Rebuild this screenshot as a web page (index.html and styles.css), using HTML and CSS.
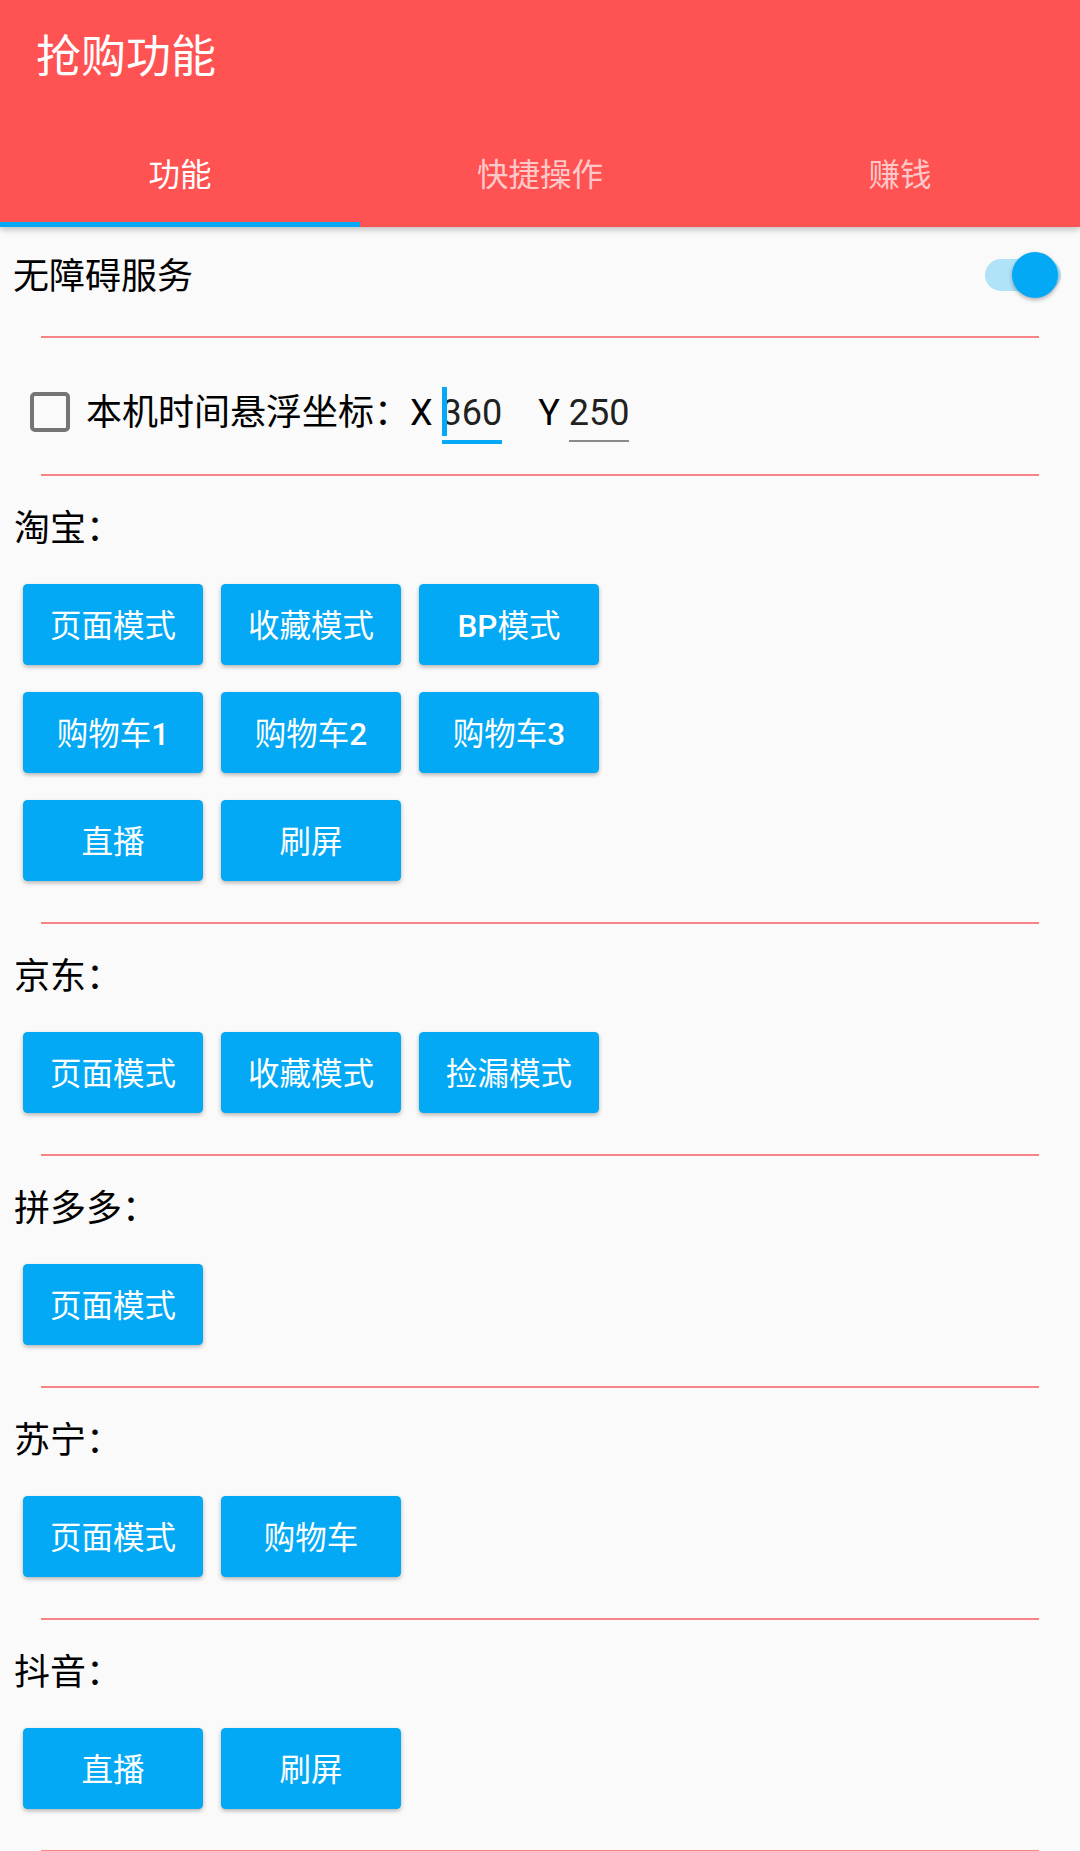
FILE: index.html
```html
<!DOCTYPE html>
<html lang="zh-CN">
<head>
<meta charset="utf-8">
<title>抢购功能</title>
<link rel="stylesheet" href="styles.css">
</head>
<body>
<header class="appbar">
  <div class="toolbar"><h1 class="title">抢购功能</h1></div>
  <nav class="tabs">
    <div class="tab active">功能</div>
    <div class="tab">快捷操作</div>
    <div class="tab">赚钱</div>
  </nav>
</header>
<main class="content">
  <div class="switch-row">
    <span class="row-text">无障碍服务</span>
    <span class="switch"></span>
  </div>
  <div class="divider"></div>
  <div class="check-row">
    <span class="checkbox"></span>
    <div class="coord">本机时间悬浮坐标：X <span class="edit focused">360</span><span class="ylabel">Y </span><span class="edit">250</span></div>
  </div>

  <section class="section">
    <div class="divider"></div>
    <div class="label">淘宝：</div>
    <div class="buttons">
      <button class="btn">页面模式</button>
      <button class="btn">收藏模式</button>
      <button class="btn"><span class="lat">BP</span>模式</button>
      <button class="btn">购物车<span class="lat">1</span></button>
      <button class="btn">购物车<span class="lat">2</span></button>
      <button class="btn">购物车<span class="lat">3</span></button>
      <button class="btn">直播</button>
      <button class="btn">刷屏</button>
    </div>
  </section>

  <section class="section">
    <div class="divider"></div>
    <div class="label">京东：</div>
    <div class="buttons">
      <button class="btn">页面模式</button>
      <button class="btn">收藏模式</button>
      <button class="btn">捡漏模式</button>
    </div>
  </section>

  <section class="section">
    <div class="divider"></div>
    <div class="label">拼多多：</div>
    <div class="buttons">
      <button class="btn">页面模式</button>
    </div>
  </section>

  <section class="section">
    <div class="divider"></div>
    <div class="label">苏宁：</div>
    <div class="buttons">
      <button class="btn">页面模式</button>
      <button class="btn">购物车</button>
    </div>
  </section>

  <section class="section">
    <div class="divider"></div>
    <div class="label">抖音：</div>
    <div class="buttons">
      <button class="btn">直播</button>
      <button class="btn">刷屏</button>
    </div>
  </section>
  <div class="divider"></div>
</main>
</body>
</html>
```
FILE: styles.css
```css
* { box-sizing: border-box; }
html, body {
  margin: 0;
  padding: 0;
  background: #fafafa;
}
body {
  width: 1080px;
  height: 1851px;
  overflow: hidden;
  font-family: Roboto, "Noto Sans CJK SC", sans-serif;
  color: #000;
}
.appbar {
  background: #ff5252;
  position: relative;
  z-index: 2;
  box-shadow: 0 3px 6px rgba(0, 0, 0, 0.22);
}
.toolbar {
  height: 118px;
  display: flex;
  align-items: center;
  padding-left: 36px;
}
.title {
  margin: 0 0 3px 0;
  font-size: 45px;
  font-weight: 400;
  line-height: 60px;
  color: #fff;
}
.tabs {
  display: flex;
  height: 109px;
}
.tab {
  flex: 1;
  display: flex;
  align-items: center;
  justify-content: center;
  font-size: 31.5px;
  color: rgba(255, 255, 255, 0.7);
  border-bottom: 5px solid transparent;
  padding-top: 4px;
}
.tab.active {
  color: #fff;
  border-bottom-color: #03a9f4;
}
.content {
  padding: 0;
}
.switch-row {
  height: 96px;
  display: flex;
  align-items: center;
  justify-content: space-between;
  padding: 4px 19px 0 13px;
}
.row-text {
  font-size: 36px;
  line-height: 48px;
}
.switch {
  width: 76px;
  height: 32px;
  border-radius: 16px;
  background: #b0e2f8;
  position: relative;
  margin-top: -4px;
}
.switch::after {
  content: "";
  position: absolute;
  right: 3px;
  top: -7px;
  width: 46px;
  height: 46px;
  border-radius: 50%;
  background: #03a9f4;
  box-shadow: 0 2px 4px rgba(0, 0, 0, 0.3);
}
.divider {
  height: 2px;
  margin: 0 41px;
  background: #f88585;
}
.switch-row + .divider {
  margin-top: 13px;
}
.check-row {
  display: flex;
  align-items: center;
  height: 68px;
  margin: 40px 0 28px 0;
  padding-left: 30px;
}
.checkbox {
  width: 40px;
  height: 40px;
  border: 4.5px solid #757575;
  border-radius: 5px;
  flex: none;
}
.coord {
  margin: 9px 0 0 16px;
  font-size: 36px;
  line-height: 48px;
  white-space: nowrap;
}
.edit {
  display: inline-block;
  position: relative;
  line-height: 48px;
  padding-bottom: 3px;
  color: #212121;
  border-bottom: 2.5px solid #8a8a8a;
}
.edit.focused {
  border-bottom: 4.5px solid #03a9f4;
}
.edit.focused::before {
  content: "";
  position: absolute;
  left: 0;
  bottom: 4px;
  width: 5px;
  height: 49px;
  background: #03a9f4;
}
.ylabel {
  margin-left: 36px;
}
.label {
  margin: 28px 0 0 14px;
  font-size: 36px;
  line-height: 48px;
  padding-top: 1px;
}
.buttons {
  display: grid;
  grid-template-columns: repeat(3, 180px);
  column-gap: 18px;
  row-gap: 27px;
  padding-left: 23px;
  margin: 31px 0 41px 0;
}
.btn {
  height: 81px;
  border: none;
  border-radius: 4.5px;
  background: #03a9f4;
  color: #fff;
  font-family: Roboto, "Noto Sans CJK SC", sans-serif;
  font-size: 31.5px;
  font-weight: 400;
  padding: 0 0 3px 0;
  box-shadow: 0 2px 4px rgba(0, 0, 0, 0.28);
}
.btn .lat {
  font-weight: 500;
}
```
